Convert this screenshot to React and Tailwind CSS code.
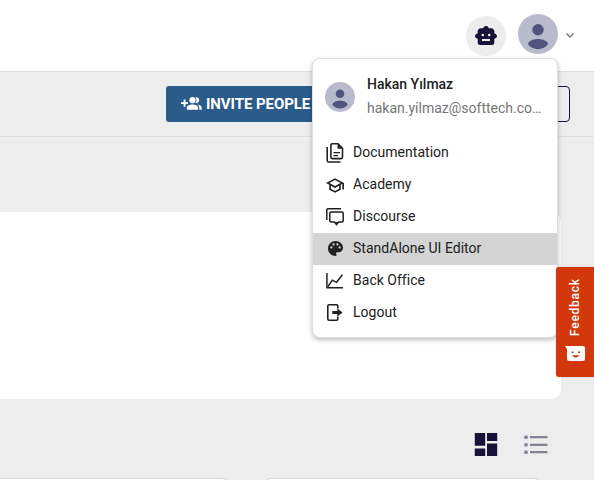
import React from "react";

function Avatar({ className }) {
  return (
    <svg viewBox="0 0 40 40" className={className}>
      <circle cx="20" cy="20" r="20" fill="#b9bacb" />
      <circle cx="20" cy="15.7" r="5.7" fill="#50537d" />
      <path d="M10 30.3c0-3.2 5.3-5.3 10-5.3s10 2.1 10 5.3c-2 3-5.9 4.9-10 4.9s-8-1.9-10-4.9z" fill="#50537d" />
    </svg>
  );
}

function RobotIcon() {
  return (
    <svg viewBox="0 0 22 19" className="mb-[1px] h-[19px] w-[22px]">
      <path
        fill="#181336"
        fillRule="evenodd"
        d="M11 0a2.800 2.800 0 0 1 2.800 2.300H16a3.500 3.500 0 0 1 3.300 4.500v.600C20.900 7.600 22 8.700 22 10s-1.100 2.400-2.700 2.700V16.500a2.500 2.500 0 0 1-2.500 2.500H5.200a2.500 2.500 0 0 1-2.500-2.500v-3.800C1.100 12.400 0 11.300 0 10s1.100-2.400 2.700-2.600v-.600A3.500 3.500 0 0 1 6 2.300h2.200A2.800 2.800 0 0 1 11 0zM7.800 7.700a1.300 1.300 0 1 0 0 2.600 1.300 1.300 0 0 0 0-2.600zM14.200 7.700a1.300 1.300 0 1 0 0 2.600 1.300 1.300 0 0 0 0-2.600zM7 13v2h8v-2z"
      />
    </svg>
  );
}

function DocumentIcon() {
  return (
    <svg viewBox="0 0 18 20" className="h-5 w-[18px]" fill="none" stroke="#212121" strokeWidth="1.6">
      <path d="M1.2 4v13.500q0 1.500 1.500 1.500H14.500" />
      <path d="M6.200.8H12l4.500 4.500v9q0 1.300-1.300 1.300h-9q-1.300 0-1.300-1.300v-12.200q0-1.300 1.300-1.300z" />
      <path d="M11.500.8v5h5z" fill="#212121" stroke="none" />
      <path d="M7.500 9.600h6.500M7.500 12.600h4.500" strokeWidth="1.400" />
    </svg>
  );
}

function AcademyIcon() {
  return (
    <svg viewBox="1 3 22 18" className="h-[15px] w-[18px]" fill="#212121">
      <path d="M12 3 1 9l4 2.180v6L12 21l7-3.820v-6l2-1.090V17h2V9L12 3zm6.820 6L12 12.720 5.180 9 12 5.280 18.820 9zM17 15.990l-5 2.730-5-2.730v-3.720L12 15l5-2.730v3.720z" />
    </svg>
  );
}

function DiscourseIcon() {
  return (
    <svg viewBox="0 0 18 18" className="mb-[1px] h-[18px] w-[18px]" fill="none" stroke="#212121" strokeWidth="1.500">
      <path d="M.8 12V1.900Q.8.8 1.900.8H15" />
      <path d="M5 4h11q1.200 0 1.200 1.200v7.600q0 1.200-1.200 1.200h-3.500l-2 2.500-2-2.500H5q-1.200 0-1.200-1.200V5.200Q3.800 4 5 4z" />
      <path d="M8.300 14h4.400l-2.200 3.500z" fill="#212121" stroke="none" />
    </svg>
  );
}

function PaletteIcon() {
  return (
    <svg viewBox="2 2 20 20" className="mb-[1px] size-[15px]" fill="#212121">
      <path d="M17.500 12a1.500 1.500 0 0 1-1.500-1.500A1.500 1.500 0 0 1 17.500 9a1.500 1.500 0 0 1 1.500 1.500 1.500 1.500 0 0 1-1.500 1.500m-3-4A1.500 1.500 0 0 1 13 6.500 1.500 1.500 0 0 1 14.500 5 1.500 1.500 0 0 1 16 6.500 1.500 1.500 0 0 1 14.500 8m-5 0A1.500 1.500 0 0 1 8 6.500 1.500 1.500 0 0 1 9.500 5 1.500 1.500 0 0 1 11 6.500 1.500 1.500 0 0 1 9.500 8m-3 4A1.500 1.500 0 0 1 5 10.500 1.500 1.500 0 0 1 6.500 9 1.500 1.500 0 0 1 8 10.500 1.500 1.500 0 0 1 6.500 12M12 2C6.500 2 2 6.500 2 12s4.500 10 10 10a1.500 1.500 0 0 0 1.500-1.500c0-.4-.2-.7-.4-1-.2-.3-.4-.6-.4-1a1.500 1.500 0 0 1 1.500-1.500H16a6 6 0 0 0 6-6c0-5-4.500-9-10-9z" />
    </svg>
  );
}

function ChartIcon() {
  return (
    <svg viewBox="0 0 18 16" className="mb-[1px] h-4 w-[18px]" fill="none" stroke="#212121" strokeWidth="1.500">
      <path d="M.9 0v14.700H17" />
      <path d="m2 13.500 4.300-6.300 4.200 2.100L16.400 1.800" />
    </svg>
  );
}

function LogoutIcon() {
  return (
    <svg viewBox="0 0 16 17" className="mb-[1px] h-[17px] w-4">
      <path d="M10.800 4.500V2q0-1.200-1.200-1.200H2Q.8.800.8 2v13q0 1.200 1.200 1.200h7.600q1.200 0 1.200-1.200v-2.500" fill="none" stroke="#212121" strokeWidth="1.600" />
      <path d="M5.300 7h5V4.500l5.200 4-5.200 4V10h-5z" fill="#212121" />
    </svg>
  );
}

function InviteIcon() {
  return (
    <svg viewBox="0 0 21 13" className="mb-[1px] h-[13px] w-[21px] shrink-0" fill="white">
      <path d="M0 5.200h2.600V2.400h1.900v2.800H7v1.800H4.500v2.700H2.600V7H0z" />
      <circle cx="11.500" cy="3.200" r="3.100" />
      <path d="M5.800 12.700v-2c0-2.200 3-3.300 5.700-3.300s5.500 1.100 5.500 3.300v2z" />
      <path d="M14.400.3a3 3 0 1 1 0 5.800 4.700 4.700 0 0 0 0-5.800zM16.400 7.600c2.300.4 4.300 1.500 4.300 3.100v2h-2.500v-2c0-1.300-.7-2.300-1.800-3.100z" />
    </svg>
  );
}

const items = [
  { label: "Documentation", Icon: DocumentIcon },
  { label: "Academy", Icon: AcademyIcon },
  { label: "Discourse", Icon: DiscourseIcon },
  { label: "StandAlone UI Editor", Icon: PaletteIcon, active: true },
  { label: "Back Office", Icon: ChartIcon },
  { label: "Logout", Icon: LogoutIcon },
];

function UserMenu() {
  return (
    <div className="absolute left-[312px] top-[58px] h-[280px] w-[246px] overflow-hidden rounded-[8px] border border-[#dedede] bg-white shadow-[0_2px_5px_rgba(0,0,0,0.25)]">
      <div className="flex h-[78px] pl-3 pt-[15px]">
        <Avatar className="mt-[8px] size-[30px] shrink-0" />
        <div className="ml-3 whitespace-nowrap text-[14px]">
          <div className="h-[21px] font-medium leading-[21px] text-[#212121]">Hakan Yılmaz</div>
          <div className="mt-[3px] h-[21px] leading-[21px] text-[#757575]">hakan.yilmaz@softtech.co…</div>
        </div>
      </div>
      {items.map(({ label, Icon, active }) => (
        <div key={label} className={`flex h-8 items-center pl-[13px] text-[14px] text-[#212121] ${active ? "bg-[#d4d4d4]" : ""}`}>
          <div className="flex w-[18px] shrink-0 justify-center"><Icon /></div>
          <span className="mb-[2px] ml-[9px] tracking-[0.02px]">{label}</span>
        </div>
      ))}
    </div>
  );
}

function Feedback() {
  return (
    <div className="absolute left-[556px] top-[267px] flex h-[110px] w-[38px] flex-col items-center rounded-l-[3px] bg-[#d3380c] pt-[11px] shadow-[0_0_2px_rgba(0,0,0,0.2)]">
      <span className="h-[58px] rotate-180 text-[12px] font-medium leading-[14px] tracking-[0.750px] text-white [writing-mode:vertical-rl]">Feedback</span>
      <svg viewBox="0 0 20 15" className="mt-[10px] h-[15px] w-5">
        <path d="M0 0h18a2 2 0 0 1 2 2v11a2 2 0 0 1-2 2H4a2 2 0 0 1-2-2V3z" fill="white" />
        <path d="M6.500 5.500h2v1.500h-2zM13 5.500h2v1.500h-2zM7.500 9.300h6.500c-.6 3-5.900 3-6.500 0z" fill="#d3380c" />
      </svg>
    </div>
  );
}

export default function App() {
  return (
    <div className="relative h-[480px] w-[594px] overflow-hidden bg-[#ededed] [font-family:Roboto,sans-serif]">
      <header className="flex h-[72px] items-start border-b border-[#dedede] bg-white pl-[466px]">
        <div className="mt-4 flex size-10 items-center justify-center rounded-full bg-[#ededed]"><RobotIcon /></div>
        <Avatar className="ml-3 mt-[14px] size-10" />
        <svg viewBox="0 0 8 5" className="ml-2 mt-[33px] h-[5px] w-2" fill="none" stroke="#757575" strokeWidth="1.300"><path d="m.5.500 3.500 3.500L7.500.5" /></svg>
      </header>
      <div className="flex h-[65px] items-start justify-between border-b border-[#dfdfdf] pl-[166px] pr-6 pt-[14px]">
        <button className="flex h-9 w-[160px] items-center rounded-[3px] bg-[#2b5b89] pl-[15px] text-[15px] font-bold text-white">
          <InviteIcon />
          <span className="ml-[4px] whitespace-nowrap tracking-[-0.07px]">INVITE PEOPLE</span>
        </button>
        <div className="h-9 w-[60px] rounded-[4px] border border-[#181336]" />
      </div>
      <div className="mt-[75px] h-[187px] w-[561px] rounded-r-[10px] bg-white" />
      <div className="flex h-[79px] items-start justify-end gap-[26px] pr-[46px] pt-[34px]">
        <svg viewBox="0 0 24 23" className="h-[23px] w-6" fill="#181336">
          <path d="M.8 0h10.400v12.800H.8zM13 0h10.200v8H13zM.8 15.500h10.400V23H.8zM13 10.500h10.200V23H13z" />
        </svg>
        <svg viewBox="0 0 24 20" className="mt-[2px] h-5 w-6" fill="#858296">
          <circle cx="2" cy="2.200" r="1.900" /><circle cx="2" cy="9.800" r="1.900" /><circle cx="2" cy="17.200" r="1.900" />
          <path d="M6 1.100h17.500v2.200H6zM6 8.800h17.500v2.200H6zM6 16.100h17.500v2.200H6z" />
        </svg>
      </div>
      <div className="flex gap-[32px]">
        <div className="-ml-5 h-20 w-[251px] rounded-[8px] border border-[#d4d4d4] bg-white" />
        <div className="h-20 w-[279px] rounded-[8px] border border-[#d4d4d4] bg-white" />
      </div>
      <UserMenu />
      <Feedback />
    </div>
  );
}
